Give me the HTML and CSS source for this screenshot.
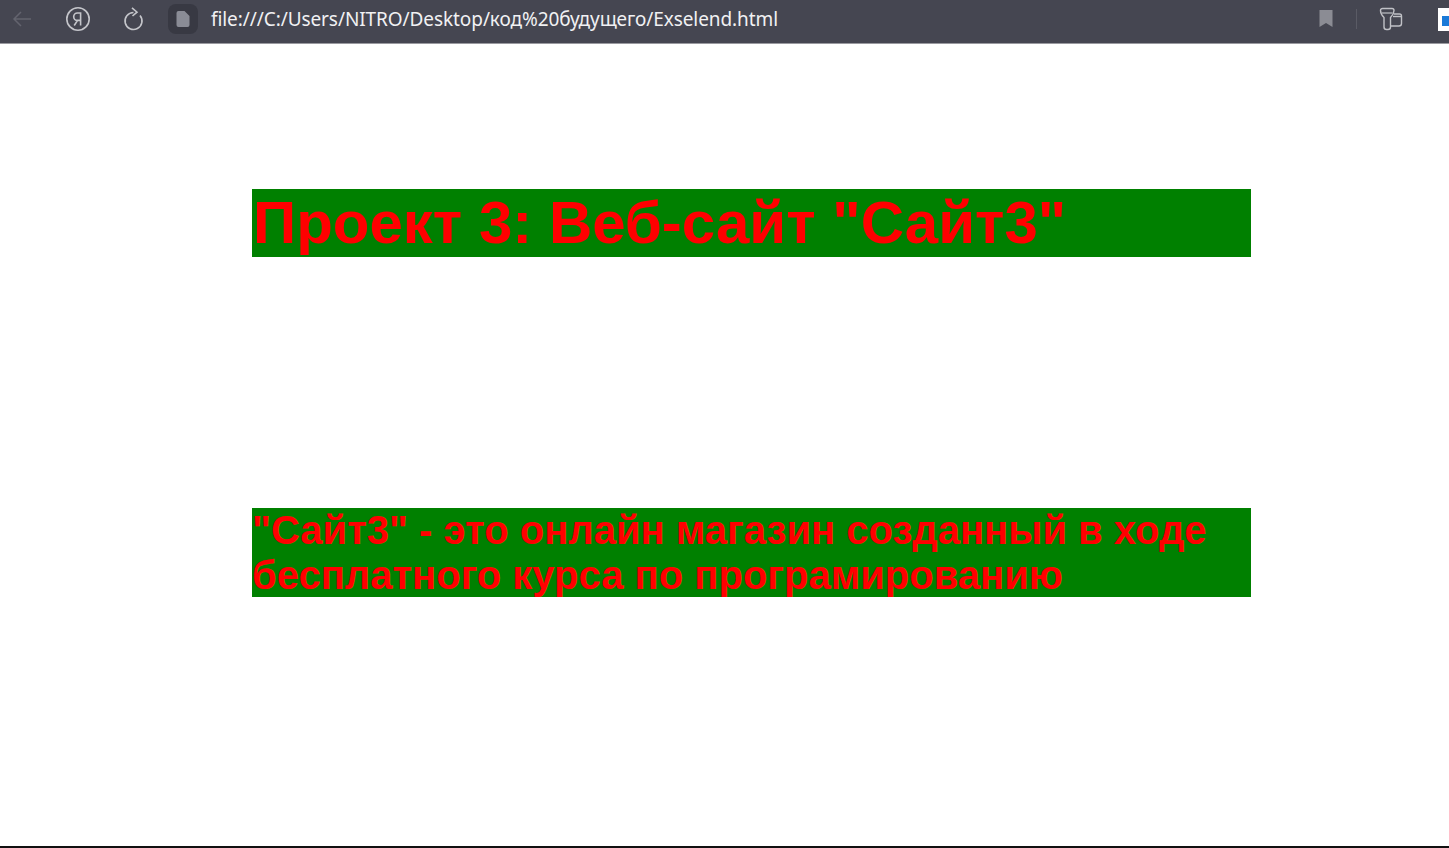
FILE: index.html
```html
<!DOCTYPE html>
<html lang="ru">
<head>
<meta charset="utf-8">
<title>Exselend</title>
<link rel="stylesheet" href="styles.css">
</head>
<body>
<header class="toolbar">
  <svg class="icon back" width="24" height="24" viewBox="0 0 24 24"><path d="M21 12H4M11 5l-7 7 7 7" fill="none" stroke="#63646e" stroke-width="1.5"/></svg>
  <svg class="icon ya" width="26" height="26" viewBox="0 0 26 26"><circle cx="13" cy="13" r="11.2" fill="none" stroke="#c4c5ca" stroke-width="1.6"/><path d="M15.6 19.5V7H12.4a3.6 3.6 0 0 0 0 7.4H15.6M12.6 14.4L9.2 19.5" fill="none" stroke="#c4c5ca" stroke-width="1.6"/></svg>
  <svg class="icon reload" width="24" height="26" viewBox="0 0 24 26"><path d="M18 9.500a8.500 8.500 0 1 1-6.500-3" fill="none" stroke="#c4c5ca" stroke-width="1.6"/><path d="M10 1.800l5 4.400-4.500 3.800" fill="none" stroke="#c4c5ca" stroke-width="1.6"/></svg>
  <span class="file-badge"><svg width="14" height="16" viewBox="0 0 14 16"><path d="M0.5 2a2 2 0 0 1 2-2H8.500L13.500 5V14a2 2 0 0 1-2 2H2.500a2 2 0 0 1-2-2Z" fill="#8a8c96"/></svg></span>
  <span class="url">file:///C:/Users/NITRO/Desktop/код%20будущего/Exselend.html</span>
  <svg class="icon bookmark" width="14" height="18" viewBox="0 0 14 18"><path d="M0.500 0H13.500V17L7 13 0.500 17Z" fill="#8b8c94"/></svg>
  <span class="divider"></span>
  <svg class="icon panel" width="24" height="24" viewBox="0 0 24 24"><path d="M15 7H20.500a2 2 0 0 1 2 2V16.500a2.500 2.500 0 0 1-2.500 2.500H11" fill="none" stroke="#c0c1c6" stroke-width="1.400"/><path d="M14 9.500H22" fill="none" stroke="#c0c1c6" stroke-width="1.400"/><path d="M1.500 3.500a2 2 0 0 1 2-2H13a2 2 0 0 1 2 2c0 3-1.500 5-3.500 7V20a2.500 2.500 0 0 1-2.500 2.500H7.500A2.500 2.500 0 0 1 5 20V10.500c-2-2-3.500-4-3.500-7Z" fill="#454651" stroke="#c0c1c6" stroke-width="1.400"/><path d="M3 6H13.500" stroke="#c0c1c6" stroke-width="1.200"/></svg>
  <span class="tab-thumb"><span class="tab-thumb-inner"></span></span>
</header>
<main class="page">
  <h1 class="title">Проект 3: Веб-сайт "Сайт3"</h1>
  <p class="lead">"Сайт3" - это онлайн магазин созданный в ходе бесплатного курса по програмированию</p>
</main>
</body>
</html>
```

FILE: styles.css
```css
html, body {
  margin: 0;
  padding: 0;
  height: 100%;
  overflow: hidden;
  background: #fff;
}
body {
  display: flex;
  flex-direction: column;
  height: 848px;
  box-sizing: border-box;
  border-bottom: 2px solid #111;
}
.toolbar {
  display: flex;
  align-items: center;
  flex: none;
  height: 44px;
  box-sizing: border-box;
  background: #454651;
  border-bottom: 1px solid #9a9aa0;
  padding: 0 0 5px 10px;
  overflow: hidden;
  font-family: "Noto Sans", "Open Sans", sans-serif;
}
.icon { flex: none; display: block; }
.back { margin-right: 31px; }
.ya { margin-right: 31px; }
.reload { margin-right: 22px; }
.file-badge {
  flex: none;
  display: flex;
  align-items: center;
  justify-content: center;
  width: 30px;
  height: 30px;
  margin-right: 13px;
  border-radius: 8px;
  background: #383943;
}
.url {
  flex: none;
  width: 1108px;
  color: #f1f1f3;
  font-size: 19px;
  letter-spacing: -0.08px;
  white-space: nowrap;
}
.divider {
  flex: none;
  width: 1px;
  height: 20px;
  margin: 0 22px 0 23px;
  background: #5a5b65;
}
.tab-thumb {
  flex: none;
  display: block;
  width: 11px;
  height: 23px;
  margin-left: 35px;
  padding: 8px 0 5px 4px;
  box-sizing: border-box;
  background: #fff;
}
.tab-thumb-inner {
  display: block;
  height: 100%;
  background: #1a7ad8;
}
.page {
  display: flex;
  flex-direction: column;
  width: 999px;
  margin-left: 252px;
  padding-top: 145px;
  font-family: "Liberation Sans", Arial, sans-serif;
  font-weight: 700;
  color: #f00;
}
.title {
  margin: 0 0 251px;
  height: 68px;
  padding-left: 1px;
  background: #008000;
  font-size: 60px;
  line-height: 68px;
}
.lead {
  margin: 0;
  height: 89px;
  background: #008000;
  font-size: 40px;
  line-height: 45px;
}
```
